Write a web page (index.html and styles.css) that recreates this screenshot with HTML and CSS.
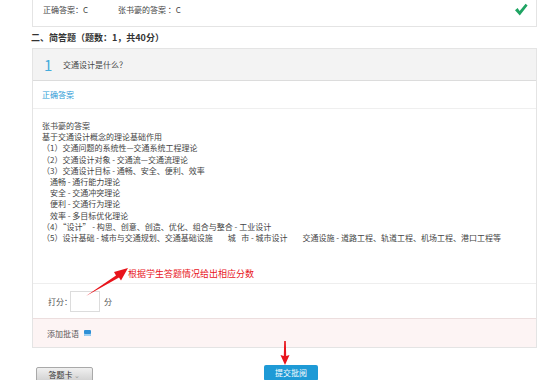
FILE: index.html
```html
<!DOCTYPE html>
<html>
<head>
  <meta charset="utf-8">
  <title>批阅</title>
  <link rel="stylesheet" href="styles.css">
</head>
<body>
  <div class="page">
    <div class="result-card">
      <span class="result-item">正确答案：C</span>
      <span class="result-item">张书豪的答案 ：C</span>
      <svg class="check" width="14" height="13" viewBox="0 0 14 13">
        <path d="M1 7.2 L3.6 5 L5.6 8 L11.6 0.8 L13.6 2.6 L5.8 12.4 Z" fill="#1fa463"/>
      </svg>
    </div>

    <h2 class="section-title">二、简答题（题数：1，共40分）</h2>

    <div class="question-card">
      <div class="question-head">
        <span class="question-no">1</span>
        <span class="question-text">交通设计是什么？</span>
      </div>

      <div class="correct-answer">正确答案</div>

      <div class="student-answer">
        <div>张书豪的答案</div>
        <div>基于交通设计概念的理论基础作用</div>
        <div>（1）交通问题的系统性—交通系统工程理论</div>
        <div>（2）交通设计对象 - 交通流—交通流理论</div>
        <div>（3）交通设计目标 - 通畅、安全、便利、效率</div>
        <div class="sub">通畅 - 通行能力理论</div>
        <div class="sub">安全 - 交通冲突理论</div>
        <div class="sub">便利 - 交通行为理论</div>
        <div class="sub">效率 - 多目标优化理论</div>
        <div>（4）“设计” - 构思、创意、创造、优化、组合与整合 - 工业设计</div>
        <div>（5）设计基础 - 城市与交通规划、交通基础设施<span class="gap"></span>城&nbsp;&nbsp;&nbsp;市 - 城市设计<span class="gap"></span>交通设施 - 道路工程、轨道工程、机场工程、港口工程等</div>
      </div>

      <div class="score-row">
        <span>打分：</span>
        <input class="score-input" type="text">
        <span>分</span>
      </div>

      <div class="comment-row">
        <span>添加批语</span>
        <span class="comment-icon"></span>
      </div>

      <span class="hint">根据学生答题情况给出相应分数</span>
      <svg class="hint-arrow" width="44" height="30" viewBox="0 0 44 30">
        <path d="M1 29 L31 8.5 L29 5 L43 1 L36 13.5 L34 10.5 Z" fill="#e8141b"/>
      </svg>
      <svg class="down-arrow" width="10" height="24" viewBox="0 0 10 24">
        <path d="M4.2 0 L5.8 0 L6.2 15 L9.5 14 L5 24 L0.5 14 L3.8 15 Z" fill="#e8141b"/>
      </svg>
    </div>

    <div class="actions">
      <button class="btn-card">答题卡 <span class="caret">⌄</span></button>
      <button class="btn-submit">提交批阅</button>
    </div>
  </div>
</body>
</html>
```

FILE: styles.css
```css
body {
  margin: 0;
  background: #fff;
  font-family: "Noto Sans CJK SC", "Noto Sans", sans-serif;
  font-size: 8px;
  color: #444;
}
.page {
  margin-left: 32px;
  width: 505px;
}
.result-card {
  display: flex;
  align-items: center;
  height: 27px;
  padding: 0 8px 8px 10px;
  border: 1px solid #e4e4e4;
  border-top: 0;
  box-sizing: border-box;
}
.result-item {
  width: 75px;
}
.check {
  margin-left: auto;
}
.section-title {
  margin: 4px 0 3px -1px;
  font-size: 9px;
  font-weight: bold;
  line-height: 14px;
  color: #333;
}
.question-card {
  position: relative;
  border: 1px solid #e4e4e4;
}
.question-head {
  display: flex;
  align-items: center;
  height: 31px;
  padding-left: 11px;
  background: #f3f3f3;
  border-bottom: 1px solid #dcdcdc;
}
.question-no {
  width: 19px;
  font-size: 15px;
  color: #45acdc;
}
.question-text {
  color: #444;
}
.correct-answer {
  height: 27px;
  line-height: 27px;
  padding-left: 9px;
  color: #2d9ad6;
  border-bottom: 1px solid #efefef;
}
.student-answer {
  padding: 11px 0 40px 9px;
  line-height: 11.2px;
  color: #444;
  border-bottom: 1px solid #eeeeee;
}
.student-answer .sub {
  padding-left: 8px;
}
.gap {
  display: inline-block;
  width: 15px;
}
.score-row {
  display: flex;
  align-items: center;
  height: 34px;
  padding-left: 15px;
  color: #555;
}
.score-input {
  width: 30px;
  height: 21px;
  margin: 0 4px 0 -2px;
  padding: 0;
  border: 1px solid #dcdcdc;
  box-sizing: border-box;
}
.comment-row {
  display: flex;
  align-items: center;
  height: 28px;
  padding-left: 14px;
  background: #fdf4f4;
  border-top: 1px solid #ecdede;
  color: #555;
}
.comment-icon {
  width: 7px;
  height: 6px;
  margin-left: 5px;
  background: #2d8fd6;
  border-radius: 1px;
  box-shadow: inset 0 -2px 0 #9fd0f2;
}
.hint {
  position: absolute;
  left: 95px;
  top: 218px;
  font-size: 9px;
  color: #e8141b;
}
.hint-arrow {
  position: absolute;
  left: 52px;
  top: 218px;
}
.down-arrow {
  position: absolute;
  left: 247px;
  top: 292px;
}
.actions {
  display: flex;
  align-items: flex-start;
  margin-top: 17px;
  padding-left: 4px;
}
.btn-card {
  width: 57px;
  height: 16px;
  margin-top: 2px;
  padding: 0;
  border: 1px solid #a9a9a9;
  border-radius: 2px;
  background: linear-gradient(#f0f0f0, #cfcfcf);
  font-family: inherit;
  font-size: 8px;
  line-height: 10px;
  color: #333;
}
.caret {
  color: #999;
  font-size: 7px;
}
.btn-submit {
  width: 54px;
  height: 16px;
  margin-left: 171px;
  padding: 0;
  border: 0;
  border-radius: 2px;
  background: #1e9ad6;
  font-family: inherit;
  font-size: 8px;
  line-height: 10px;
  color: #fff;
}
```
